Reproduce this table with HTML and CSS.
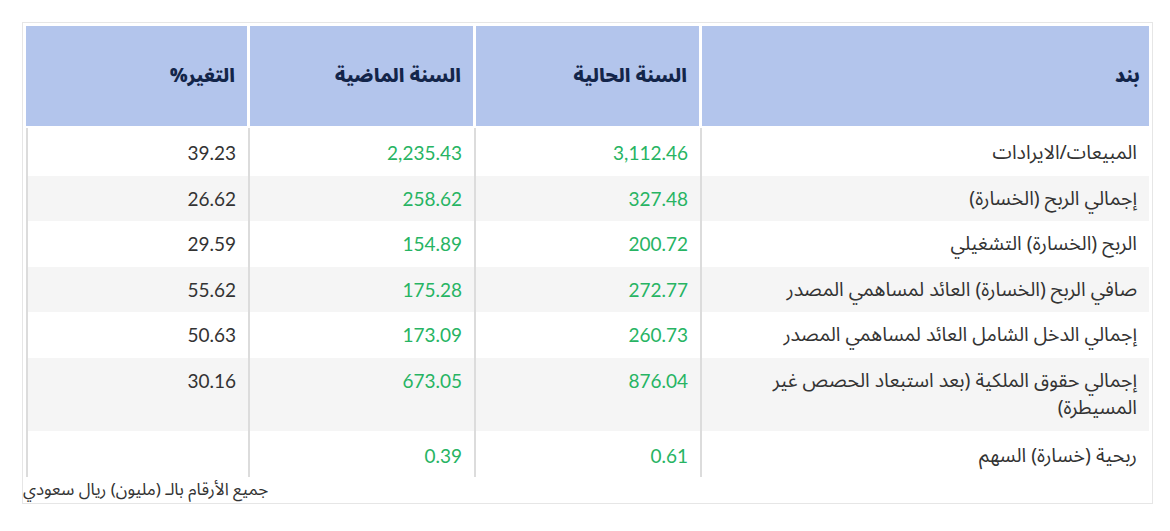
FILE: index.html
```html
<!DOCTYPE html>
<html lang="ar" dir="rtl">
<head>
<meta charset="utf-8">
<title>القوائم المالية</title>
<link rel="stylesheet" href="styles.css">
</head>
<body>
<div class="card">
  <table class="fin-table">
    <colgroup>
      <col class="w-item">
      <col class="w-num">
      <col class="w-num">
      <col class="w-last">
    </colgroup>
    <thead>
      <tr>
        <th class="col-item">بند</th>
        <th class="col-num">السنة الحالية</th>
        <th class="col-num">السنة الماضية</th>
        <th class="col-num">التغير%</th>
      </tr>
    </thead>
    <tbody>
      <tr>
        <td class="label">المبيعات/الايرادات</td>
        <td class="num pos">3,112.46</td>
        <td class="num pos">2,235.43</td>
        <td class="num">39.23</td>
      </tr>
      <tr class="alt">
        <td class="label">إجمالي الربح (الخسارة)</td>
        <td class="num pos">327.48</td>
        <td class="num pos">258.62</td>
        <td class="num">26.62</td>
      </tr>
      <tr>
        <td class="label">الربح (الخسارة) التشغيلي</td>
        <td class="num pos">200.72</td>
        <td class="num pos">154.89</td>
        <td class="num">29.59</td>
      </tr>
      <tr class="alt">
        <td class="label">صافي الربح (الخسارة) العائد لمساهمي المصدر</td>
        <td class="num pos">272.77</td>
        <td class="num pos">175.28</td>
        <td class="num">55.62</td>
      </tr>
      <tr>
        <td class="label">إجمالي الدخل الشامل العائد لمساهمي المصدر</td>
        <td class="num pos">260.73</td>
        <td class="num pos">173.09</td>
        <td class="num">50.63</td>
      </tr>
      <tr class="alt">
        <td class="label">إجمالي حقوق الملكية (بعد استبعاد الحصص غير المسيطرة)</td>
        <td class="num pos">876.04</td>
        <td class="num pos">673.05</td>
        <td class="num">30.16</td>
      </tr>
      <tr>
        <td class="label">ربحية (خسارة) السهم</td>
        <td class="num pos">0.61</td>
        <td class="num pos">0.39</td>
        <td class="num"></td>
      </tr>
    </tbody>
  </table>
  <div class="note">جميع الأرقام بالـ (مليون) ريال سعودي</div>
</div>
</body>
</html>
```

FILE: styles.css
```css
html, body {
  margin: 0;
  padding: 0;
  background: #ffffff;
}

body {
  padding: 22px 17px 0 22px;
  font-family: "Noto Sans Arabic", "DejaVu Sans", sans-serif;
  color: #333333;
}

.card {
  width: 1123px;
  border: 1px solid #e6e6e6;
  padding: 3px 3px 0 3px;
}

.fin-table {
  width: 1123px;
  border-collapse: separate;
  border-spacing: 0;
  table-layout: fixed;
}

.w-item { width: 447px; }
.w-num { width: 226px; }
.w-last { width: 224px; }

.fin-table th {
  background: #b3c5ec;
  color: #13254a;
  font-weight: 900;
  font-size: 18.5px;
  height: 100px;
  padding: 0 10px 0 12px;
  text-align: right;
  vertical-align: middle;
  border-bottom: 2px solid #ffffff;
}

.fin-table th.col-item {
  padding-right: 9px;
}

.fin-table th.col-num {
  border-right: 3px solid #ffffff;
  padding-right: 12px;
}

.fin-table td {
  font-size: 19.5px;
  line-height: 27.5px;
  padding: 9px 12px 9px 12px;
  vertical-align: top;
  text-align: right;
}

.fin-table td.num {
  border-right: 2px solid #dcdcdc;
  font-family: "Lato", "DejaVu Sans", sans-serif;
  font-size: 19px;
  color: #333333;
  padding-right: 12px;
}

.fin-table td.num:last-child {
  border-left: 2px solid #dcdcdc;
}

.fin-table td.label {
  padding-right: 12px;
  color: #333333;
}

.fin-table td.pos {
  color: #27b463;
}

.fin-table tbody tr:first-child td {
  padding-top: 11px;
}

.fin-table tbody tr:last-child td {
  padding-top: 11px;
  padding-bottom: 8px;
}

.fin-table tr.alt td {
  background: #f5f5f5;
}

.note {
  text-align: left;
  font-size: 17px;
  line-height: 24px;
  padding: 1px 0 1px 0;
  margin-left: -3px;
  color: #333333;
}
```
